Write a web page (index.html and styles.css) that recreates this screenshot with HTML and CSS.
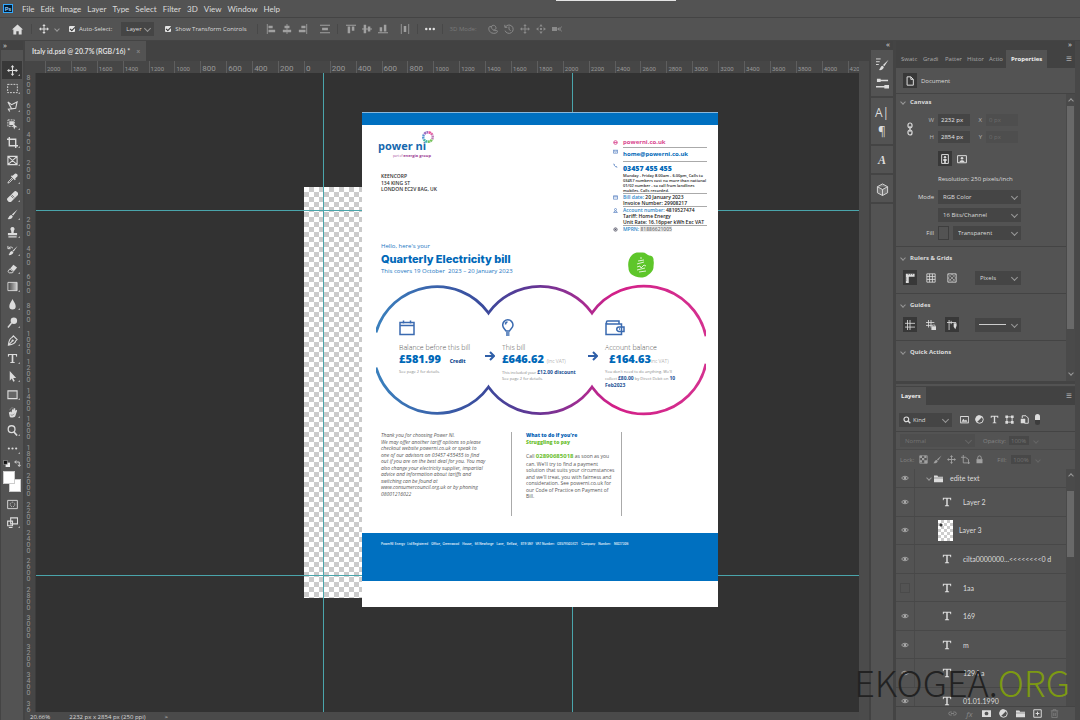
FILE: index.html
```html
<!DOCTYPE html>
<html lang="en">
<head>
    <meta charset="UTF-8">
    <meta name="viewport" content="width=device-width, initial-scale=1.0">
    <title>Italy id.psd</title>
    <link rel="stylesheet" href="styles.css">
</head>
<body>
    <!-- Shared icons -->
    <svg class="defs" aria-hidden="true">
        <symbol id="move" viewBox="0 0 12 12"><path d="M6 0l2 2.500H6.600V5.400H9.500V4l2.500 2-2.500 2V6.600H6.600V9.500H8L6 12 4 9.500H5.400V6.600H2.500V8L0 6l2.500-2v1.400H5.400V2.500H4z" fill="currentColor"/></symbol>
        <symbol id="type" viewBox="0 0 12 12"><path d="M1 1h10v3h-.8L9.500 2.200H6.900v7.500l1.600.5v.8h-5v-.8l1.600-.5V2.200H2.500L1.800 4H1z" fill="currentColor"/></symbol>
        <symbol id="brush" viewBox="0 0 12 12"><path d="M11.500.5L6.800 7.200 5.300 6zM4.800 6.600l1.500 1.300C6 10.300 3.500 11.500.5 11c1.500-.8 1.300-3.800 4.300-4.400z" fill="currentColor"/></symbol>
        <symbol id="eye" viewBox="0 0 12 12"><path d="M.8 6C3 2.600 9 2.600 11.200 6 9 9.400 3 9.400.8 6z" fill="none" stroke="currentColor" stroke-width="1.300"/><circle cx="6" cy="6" r="2" fill="currentColor"/></symbol>
        <symbol id="folder" viewBox="0 0 12 12"><path d="M0 2h4.500l1 1.500H12V5H0zM0 5.700h12V11H0z" fill="currentColor"/></symbol>
        <symbol id="halfcircle" viewBox="0 0 12 12"><circle cx="6" cy="6" r="5" fill="none" stroke="currentColor" stroke-width="1.300"/><path d="M9.500 2.500A5 5 0 1 0 2.500 9.500z" fill="currentColor"/></symbol>
        <symbol id="picture" viewBox="0 0 12 12"><path d="M.5 2h11v8.500H.5z" fill="none" stroke="currentColor" stroke-width="1.300"/><path d="M2 9l2.500-4 2 2.500L8 6l2 3z" fill="currentColor"/></symbol>
        <symbol id="lock" viewBox="0 0 12 12"><path d="M2 5.500h8V11H2z" fill="currentColor"/><path d="M3.700 5.500V3.500a2.300 2.300 0 0 1 4.600 0v2" fill="none" stroke="currentColor" stroke-width="1.300"/></symbol>
        <symbol id="alignstart" viewBox="0 0 12 12"><path d="M1 0h1v12H1zM3 2h5v3H3zM3 7h8v3H3z" fill="currentColor"/></symbol>
        <symbol id="aligncenter" viewBox="0 0 12 12"><path d="M5.500 0h1v12h-1zM3 2h6v3H3zM1 7h10v3H1z" fill="currentColor"/></symbol>
        <symbol id="spread" viewBox="0 0 12 12"><path d="M0 1h12v1H0zM0 10h12v1H0zM2.500 4.500h7v3h-7z" fill="currentColor"/></symbol>
    </svg>

    <header class="menubar">
        <span class="ps-logo">Ps</span>
        <nav>
            <button>File</button><button>Edit</button><button>Image</button><button>Layer</button><button>Type</button><button>Select</button><button>Filter</button><button>3D</button><button>View</button><button>Window</button><button>Help</button>
        </nav>
        <div class="window-strip"></div>
    </header>

    <div class="optionsbar">
        <button class="home" aria-label="Home"><svg viewBox="0 0 12 12"><path d="M6 .5L12 6h-1.500v5.500H7.300V8H4.700v3.500H1.500V6H0z" fill="currentColor"/></svg></button>
        <button class="current" aria-label="Move tool"><svg><use href="#move"/></svg><i class="chev"></i></button>
        <label class="check auto"><input type="checkbox" checked>Auto-Select:</label>
        <span class="select target"><select aria-label="Target"><option>Layer</option></select></span>
        <label class="check"><input type="checkbox" checked>Show Transform Controls</label>
        <div class="group first">
            <svg><use href="#alignstart"/></svg>
            <svg><use href="#aligncenter"/></svg>
            <svg class="flip"><use href="#alignstart"/></svg>
        </div>
        <div class="single"><svg><use href="#spread"/></svg></div>
        <div class="group">
            <svg class="turn"><use href="#alignstart"/></svg>
            <svg class="turn"><use href="#aligncenter"/></svg>
            <svg class="turnback"><use href="#alignstart"/></svg>
        </div>
        <div class="single"><svg class="turn"><use href="#spread"/></svg></div>
        <button class="more" aria-label="More options"><svg viewBox="0 0 12 12"><circle cx="1.500" cy="6" r="1.500"/><circle cx="6" cy="6" r="1.500"/><circle cx="10.500" cy="6" r="1.500"/></svg></button>
        <div class="mode3d">
            <span>3D Mode:</span>
            <svg viewBox="0 0 12 12"><path d="M2 3C0 5 1 9 4 10.500s7 .5 7.500-1.500S8 9 6 7 3 3 5 2s4 0 4.500 2-1 3-2.500 3M2 3l3 .5" fill="none" stroke="currentColor" stroke-width="1.200"/></svg>
            <svg viewBox="0 0 12 12"><path d="M1 1v3h3M1.500 4A5 5 0 1 1 1.300 8M6 3v3.500L8 8" fill="none" stroke="currentColor" stroke-width="1.200"/></svg>
            <svg><use href="#move"/></svg>
            <svg viewBox="0 0 12 12"><path d="M6 0l2 3H4zM6 12l2-3H4zM0 6l3-2v4zM12 6L9 4v4zM4.800 4.800h2.400v2.400H4.800z" fill="currentColor"/></svg>
            <svg viewBox="0 0 12 12"><path d="M0 3.500h6v5H0zM6 6l3-2.500v5z" fill="currentColor"/><path d="M11.500 3L9.500 6l2 3" fill="none" stroke="currentColor"/></svg>
        </div>
    </div>

    <main class="workspace">
        <aside class="tools">
            <div class="tools-head">»</div>
            <button class="active" aria-label="Move"><svg><use href="#move"/></svg></button>
            <button aria-label="Marquee"><svg viewBox="0 0 12 12"><path d="M.7 1.500h10.600v9H.7z" fill="none" stroke="currentColor" stroke-dasharray="2 1.200"/></svg></button>
            <button aria-label="Lasso"><svg viewBox="0 0 12 12"><path d="M1 1l4 3 6-3-1.500 7L5 8.500zM5 8.500L1.500 9l1.500 2.500" fill="none" stroke="currentColor" stroke-width="1.200"/></svg></button>
            <button aria-label="Object selection"><svg viewBox="0 0 12 12"><path d="M1 1h7v7H1z" fill="none" stroke="currentColor" stroke-dasharray="2 1"/><path d="M2.500 2.500h5v4h-5zM6 5l5.500 4H9l-1.200 2.500z" fill="currentColor"/></svg></button>
            <button aria-label="Crop"><svg viewBox="0 0 12 12"><path d="M2.500 0v9.500H12M0 2.500h9.500V12" fill="none" stroke="currentColor" stroke-width="1.500"/></svg></button>
            <button aria-label="Frame"><svg viewBox="0 0 12 12"><path d="M1 1.500h10v9H1zM1 1.500l10 9M11 1.500l-10 9" fill="none" stroke="currentColor" stroke-width="1.200"/></svg></button>
            <button aria-label="Eyedropper"><svg viewBox="0 0 12 12"><path d="M6 3l3-2.500c2 0 3 1.500 2.500 3L9 6l.5 1-1 .8L4.200 3.500 5 2.600z" fill="currentColor"/><path d="M6 5L1.500 9.500 1 11l1.500-.5L7 6" fill="none" stroke="currentColor"/></svg></button>
            <button aria-label="Healing brush"><svg viewBox="0 0 12 12"><rect x="-1" y="3.500" width="14" height="5.500" rx="2" transform="rotate(-45 6 6)" fill="currentColor"/><path d="M4 5l3 3M5 4l3 3" stroke="#535353" stroke-width=".8"/></svg></button>
            <button aria-label="Brush"><svg><use href="#brush"/></svg></button>
            <button aria-label="Clone stamp"><svg viewBox="0 0 12 12"><path d="M6 0a2.300 2.300 0 0 1 1.500 4L7.200 6.500H11V9H1V6.500h3.800L4.500 4A2.300 2.300 0 0 1 6 0zM1.500 10h9v1.500h-9z" fill="currentColor"/></svg></button>
            <button aria-label="History brush"><svg viewBox="0 0 12 12"><path d="M11.500 1L7.300 7.200 6 6.200zM5.500 6.600L7 8C6.500 10.300 4 11.500 1.500 11c1.500-.8 1-3.800 4-4.400z" fill="currentColor"/><path d="M1 1v3h3M1.300 4C2 2 5 1.500 6.500 3.500" fill="none" stroke="currentColor"/></svg></button>
            <button aria-label="Eraser"><svg viewBox="0 0 12 12"><path d="M7 2l4 3-3.500 4-4-3z" fill="currentColor"/><path d="M3 6.500l4 3-1.200 1.200H2.500L1 9.300z" fill="none" stroke="currentColor"/></svg></button>
            <button aria-label="Gradient"><svg viewBox="0 0 12 12"><defs><linearGradient id="grad"><stop stop-color="#444"/><stop offset="1" stop-color="#ccc"/></linearGradient></defs><path d="M1 1.500h10v9H1z" fill="url(#grad)" stroke="currentColor"/></svg></button>
            <button aria-label="Blur"><svg viewBox="0 0 12 12"><path d="M6 0c1 2.500 3.500 5 3.500 8a3.500 3.500 0 0 1-7 0C2.500 5 5 2.500 6 0z" fill="currentColor"/></svg></button>
            <button aria-label="Dodge"><svg viewBox="0 0 12 12"><circle cx="7.500" cy="4" r="3.500" fill="currentColor"/><path d="M5 6.500l-4 5" stroke="currentColor" stroke-width="1.500"/></svg></button>
            <button aria-label="Pen"><svg viewBox="0 0 12 12"><path d="M7 1l4 4-1.500 1.500C9 9.500 6 10.500 1.500 11 2 6.500 3 3.500 5.500 2.700zM1.500 11L6 6.500" fill="none" stroke="currentColor" stroke-width="1.200"/><circle cx="6.200" cy="6" r="1.200" fill="currentColor"/></svg></button>
            <button aria-label="Type"><svg><use href="#type"/></svg></button>
            <button aria-label="Path selection"><svg viewBox="0 0 12 12"><path d="M3 0l7 7.500H6.800L8.500 11l-1.700.8L5.300 8.300 3 10.500z" fill="currentColor"/></svg></button>
            <button aria-label="Rectangle"><svg viewBox="0 0 12 12"><path d="M1 2h10v8.500H1z" fill="#666" stroke="currentColor" stroke-width="1.200"/></svg></button>
            <button aria-label="Hand"><svg viewBox="0 0 12 12"><path d="M2 6l2-1 1 1 .5-3.500L7 3l.5-2L9 1.500V4l1.500-1L11 4 9 10c-2 2-5 2-6 .5z" fill="currentColor"/><path d="M3 3.500C4 1 5 .7 7 1M4 8.500c1.500 1 3 0 4-1" fill="none" stroke="#888"/></svg></button>
            <button aria-label="Zoom"><svg viewBox="0 0 12 12"><circle cx="5" cy="4.500" r="3.700" fill="none" stroke="currentColor" stroke-width="1.400"/><path d="M7.500 7.500l3.500 4" stroke="currentColor" stroke-width="1.700"/></svg></button>
            <button aria-label="Edit toolbar"><svg viewBox="0 0 12 12" fill="currentColor"><circle cx="2" cy="6" r="1.200"/><circle cx="6" cy="6" r="1.200"/><circle cx="10" cy="6" r="1.200"/></svg></button>
            <div class="swap">
                <svg viewBox="0 0 8 8"><path d="M3 3h5v5H3z" fill="#eee"/><path d="M.5.5h4.500v4.500H.5z" fill="#111" stroke="#bbb" stroke-width=".6"/></svg>
                <svg viewBox="0 0 8 8"><path d="M2.500.5L.8 2.300l1.700 1.700M1 2.300h5v5M4.300 5.500L6 7.300l1.700-1.800" fill="none" stroke="#ddd"/></svg>
            </div>
            <div class="swatches"><span class="back"></span><span class="front"></span></div>
            <button class="plain" aria-label="Quick mask"><svg viewBox="0 0 12 12"><path d="M.7 1.500h10.600v9H.7z" fill="none" stroke="currentColor"/><circle cx="6" cy="6" r="2.500" fill="none" stroke="currentColor" stroke-dasharray="1 1"/></svg></button>
            <button aria-label="Screen mode"><svg viewBox="0 0 12 12"><path d="M4 1h7.500v6.500H4zM.7 4.500H6v5H.7zM2 11.500h4" fill="none" stroke="currentColor" stroke-width="1.200"/></svg></button>
        </aside>

        <section class="document">
            <div class="tabbar"><div class="tab">Italy id.psd @ 20.7% (RGB/16) *<button aria-label="Close tab">×</button></div></div>
            <div class="ruler-top" id="rulerTop"></div>
            <div class="ruler-left" id="rulerLeft"></div>
            <div class="canvas">
                <div class="artboard"></div>
                <div class="guide v one"></div>
                <div class="guide v two"></div>
                <div class="guide h three"></div>
                <div class="guide h four"></div>

                <article class="bill">
                    <div class="bill-top"></div>
                    <div class="bill-head">
                        <div class="sender">
                            <div class="brand">
                                <span class="brand-name">power ni</span>
                                <svg viewBox="0 0 14 14" fill="none" stroke-width="2.400">
                                    <path d="M7 2.200A4.800 4.800 0 0 1 11.200 4.600" stroke="#e4579d"/>
                                    <path d="M11.200 4.600A4.800 4.800 0 0 1 11.200 9.400" stroke="#c07ab8"/>
                                    <path d="M11.200 9.400A4.800 4.800 0 0 1 7 11.800" stroke="#76c25c"/>
                                    <path d="M7 11.800A4.800 4.800 0 0 1 2.800 9.400" stroke="#48b8a8"/>
                                    <path d="M2.800 9.400A4.800 4.800 0 0 1 2.800 4.600" stroke="#5496d2"/>
                                    <path d="M2.800 4.600A4.800 4.800 0 0 1 7 2.200" stroke="#9a6cc0"/>
                                    <circle cx="7" cy="7" r="4.800" stroke="#fff" stroke-dasharray=".5 2" stroke-width="3"/>
                                </svg>
                            </div>
                            <p class="brand-sub"><span>part of</span> <b>energia group</b></p>
                            <address>KEENCORP<br>134 KING ST<br>LONDON EC2V 8AG, UK</address>
                        </div>
                        <ul class="contact">
                            <li class="web"><svg viewBox="0 0 6 6"><circle cx="3" cy="3" r="2.200"/><path d="M1 3h4"/></svg><p>powerni.co.uk</p></li>
                            <li class="mail"><svg viewBox="0 0 6 6"><path d="M.5 1.500h5v3.500h-5zM.5 1.500L3 3.500l2.500-2"/></svg><p>home@powerni.co.uk</p></li>
                            <li class="phone"><svg viewBox="0 0 6 6"><path d="M1 1c0 2 2 4 4 4M1 1l1 1M5 5L4 4"/></svg><p>03457 455 455</p>
                                <small>Monday - Friday 8.00am - 6.00pm, Calls to<br>03457 numbers cost no more than national<br>01/02 number - so call from landlines<br>mobiles. Calls recorded.</small></li>
                            <li><svg viewBox="0 0 6 6"><path d="M.5 1h5v4h-5zM.5 2.200h5"/></svg><p><em>Bill date:</em> 20 January 2023<br>Invoice Number: 29908217</p></li>
                            <li><svg viewBox="0 0 6 6"><circle cx="3" cy="1.800" r="1.200"/><path d="M.8 5.500h4.400L3.800 3.500H2.200z"/></svg><p><em>Account number:</em> 4819527474<br>Tariff: Home Energy<br>Unit Rate: 16.16pper kWh Exc VAT</p></li>
                            <li class="mprn"><svg viewBox="0 0 6 6" class="dark"><circle cx="3" cy="3" r="2"/><path d="M3 2v2M2 3h2"/></svg><p><em>MPRN:</em> <span>81886621005</span></p></li>
                        </ul>
                    </div>

                    <div class="bill-title">
                        <div>
                            <p>Hello, here's your</p>
                            <h1>Quarterly Electricity bill</h1>
                            <p>This covers 19 October &nbsp;2023 – 20 January 2023</p>
                        </div>
                        <svg class="badge" viewBox="0 0 28 28">
                            <path d="M5 4C9 0 13 2 15 1.500c3-.5 5 2 7 3 3 0 5 2 4.500 5 .8 3-.2 5 0 7-.5 4-3.500 6-6 8-3 2.500-8 2.500-12 1C4 24 1.500 21 1.500 17 .8 13 1 8 5 4z" fill="#5ec62a"/>
                            <path d="M11 10l6-1M10 13l7-2M10 16l3-1 1 2 3-3 2 1M10 19l8-2M12 21l7-1M13 7h2" fill="none" stroke="#fff" stroke-width=".8"/>
                        </svg>
                    </div>

                    <div class="summary">
                        <svg class="rings" viewBox="0 0 330 132" preserveAspectRatio="none">
                            <defs>
                                <linearGradient id="ring" gradientUnits="userSpaceOnUse" x1="0" y1="0" x2="330" y2="0">
                                    <stop offset="0" stop-color="#3a80bd"/>
                                    <stop offset=".33" stop-color="#3a4a9c"/>
                                    <stop offset=".48" stop-color="#633594"/>
                                    <stop offset=".62" stop-color="#a02d92"/>
                                    <stop offset=".72" stop-color="#d31f88"/>
                                    <stop offset="1" stop-color="#d4318f"/>
                                </linearGradient>
                            </defs>
                            <path d="M0 48.400A63.500 63.500 0 0 1 112.500 29A63.500 63.500 0 0 1 216 29A63.500 63.500 0 0 1 330 52.300M0 83.600A63.500 63.500 0 0 0 112.500 103A63.500 63.500 0 0 0 216 103A63.500 63.500 0 0 0 330 79.700" fill="none" stroke="url(#ring)" stroke-width="2.800"/>
                        </svg>
                        <div class="amount">
                            <svg class="ico" viewBox="0 0 20 18"><path d="M1 3.500h14v12H1zM1 6.500h14M4.500 1.500v3M11.500 1.500v3"/></svg>
                            <h2>Balance before this bill</h2>
                            <p class="sum">£581.99 <b>Credit</b></p>
                            <p class="note">See page 2 for details.</p>
                        </div>
                        <svg class="arrow" viewBox="0 0 10 10"><path d="M0 5h9M5 1l4 4-4 4"/></svg>
                        <div class="amount">
                            <svg class="ico" viewBox="0 0 20 18"><path d="M4 12C3 10 .7 9 .7 6a5 5 0 0 1 10.300 0c0 3-2.500 4-3.500 6zM4 14h3.500M4 16h3.500M3.500 5.500C3.500 4 4.500 3 5.500 3"/></svg>
                            <h2>This bill</h2>
                            <p class="sum">£646.62 <small>(inc VAT)</small></p>
                            <p class="note">This included your <b>£12.00 discount</b><br>See page 2 for details.</p>
                        </div>
                        <svg class="arrow" viewBox="0 0 10 10"><path d="M0 5h9M5 1l4 4-4 4"/></svg>
                        <div class="amount">
                            <svg class="ico" viewBox="0 0 20 18"><path d="M1 4v11.500h15.500V5H2.500C1 5 1 2 2.500 2H14v3M16.500 8H14a2.200 2.200 0 0 0 0 4.500h5V8h-2.500M14 10h1"/></svg>
                            <h2>Account balance</h2>
                            <p class="sum last">£164.63<small>inc VAT)</small></p>
                            <p class="note">You don't need to do anything. We'll<br>collect <b>£80.00</b> by Direct Debit on <b>10<br>Feb2023</b></p>
                        </div>
                    </div>

                    <div class="notes">
                        <p class="thanks">Thank you for choosing Power NI.<br>We may offer another tariff options so please<br>checkout website powerni.co.uk or speak to<br>one of our advisors on 03457 455455 to find<br>out if you are on the best deal for you. You may<br>also change your electricity supplier, impartial<br>advice and information about tariffs and<br>switching can be found at<br>www.consumercouncil.org.uk or by phoning<br>08001216022</p>
                        <div class="help">
                            <h3>What to do if you're</h3>
                            <h3 class="green">Struggling to pay</h3>
                            <p>Call <b>02890685018</b> as soon as you<br>can. We'll try to find a payment<br>solution that suits your circumstances<br>and we'll treat, you with fairness and<br>consideration. See powerni.co.uk for<br>our Code of Practice on Payment of<br>Bill.</p>
                        </div>
                    </div>
                    <footer>PowerNI &nbsp;Energy &nbsp; Ltd Registered &nbsp; &nbsp;Office, &nbsp;Greenwood &nbsp; &nbsp;House, &nbsp; 64 Newforge &nbsp; &nbsp;Lane, &nbsp; Belfast, &nbsp; &nbsp;BT9 5NF &nbsp; VAT Number: &nbsp; GB578503421 &nbsp; &nbsp; Company &nbsp; &nbsp;Number: &nbsp; &nbsp;NI027306</footer>
                </article>
            </div>
            <div class="status"><span>20.66%</span><span>2232 px x 2854 px (250 ppi)</span><span>&gt;</span></div>
        </section>

        <div class="gutter"></div>

        <aside class="dock">
            <div class="dock-head">«</div>
            <div class="dock-group">
                <button aria-label="Brush settings"><svg viewBox="0 0 14 14"><path d="M0 1h5M0 4h4M0 7h3" stroke="currentColor"/><path d="M13.500 2L9 9 7.500 7.500zM7 8.300l1.500 1.300C8 12 6 13.500 3 13c1.500-.8 1.500-4 4-4.700z" fill="currentColor"/></svg></button>
                <button aria-label="Brushes"><svg viewBox="0 0 14 14"><path d="M1 2h4v3.500H1zM5 3h8v1.500H5zM9 8.500h5v4H9zM0 9.800h9v1.500H0z" fill="currentColor"/></svg></button>
            </div>
            <div class="dock-group">
                <button class="letter" aria-label="Character">A|</button>
                <button class="letter" aria-label="Paragraph">¶</button>
            </div>
            <div class="dock-group"><button class="letter script" aria-label="Glyphs">A</button></div>
            <div class="dock-group"><button aria-label="3D"><svg viewBox="0 0 14 14"><path d="M7 1l5.500 3v6.500L7 13.500l-5.500-3V4zM1.500 4L7 7l5.500-3M7 7v6.500" fill="#777" stroke="currentColor"/></svg></button></div>
        </aside>

        <aside class="panels">
            <div class="panels-head">»</div>
            <section class="properties">
                <div class="tabs">
                    <button>Swatc</button><button>Gradi</button><button>Patter</button><button>Histor</button><button>Actio</button><button class="on">Properties</button>
                    <span class="menu">≡</span>
                </div>
                <div class="doc-row"><span class="pic dark"><svg viewBox="0 0 12 12"><path d="M2.500 1h4.500L10 4v7H2.500zM7 1v3h3" fill="none" stroke="currentColor" stroke-width="1.200"/></svg></span>Document</div>
                <div class="scroller">
                    <div class="sections">
                        <div class="section canvas-props">
                            <h4><i class="chev"></i>Canvas</h4>
                            <div class="size">
                                <svg viewBox="0 0 8 14" fill="none" stroke="currentColor" stroke-width="1.200"><rect x="2" y="1" width="4" height="5" rx="2"/><rect x="2" y="8" width="4" height="5" rx="2"/><path d="M4 4v6"/></svg>
                                <div class="fields">
                                    <label for="w">W</label><input id="w" value="2232 px"><label for="x">X</label><input id="x" value="0 px" disabled>
                                    <label for="h">H</label><input id="h" value="2854 px"><label for="y">Y</label><input id="y" value="0 px" disabled>
                                </div>
                            </div>
                            <div class="orient">
                                <button class="pic dark" aria-label="Portrait"><svg viewBox="0 0 12 12"><path d="M2 .7h8v10.600H2z" fill="none" stroke="currentColor" stroke-width="1.200"/><circle cx="6" cy="4" r="1.500" fill="currentColor"/><path d="M4 6h4v2.500H7V11H5V8.500H4z" fill="currentColor"/></svg></button>
                                <button class="pic" aria-label="Landscape"><svg viewBox="0 0 12 12"><path d="M.7 2h10.600v8.500H.7z" fill="none" stroke="currentColor" stroke-width="1.200"/><circle cx="6" cy="5" r="1.500" fill="currentColor"/><path d="M3 9.500C3.500 7 8.500 7 9 9.500z" fill="currentColor"/></svg></button>
                            </div>
                            <p class="resolution">Resolution: 250 pixels/inch</p>
                            <div class="modes">
                                <label for="mode">Mode</label><span class="select"><select id="mode"><option>RGB Color</option></select></span>
                                <span></span><span class="select"><select aria-label="Depth"><option>16 Bits/Channel</option></select></span>
                                <label for="fill">Fill</label><div class="fill"><span class="chip"></span><span class="select"><select id="fill"><option>Transparent</option></select></span></div>
                            </div>
                        </div>
                        <div class="section">
                            <h4><i class="chev"></i>Rulers &amp; Grids</h4>
                            <div class="line">
                                <button class="pic dark" aria-label="Rulers"><svg viewBox="0 0 12 12"><path d="M1 1h10.500v3.500H4.500V12H1z" fill="currentColor"/><path d="M4 1v1.500M6.500 1v1.500M9 1v1.500M1 6h1.500M1 8.500h1.500" stroke="#383838" stroke-width=".6"/></svg></button>
                                <button class="pic" aria-label="Grid"><svg viewBox="0 0 12 12"><path d="M1 1h10v10H1zM4.300 1v10M7.700 1v10M1 4.300h10M1 7.700h10" fill="none" stroke="currentColor"/></svg></button>
                                <button class="pic" aria-label="Pixel grid"><svg viewBox="0 0 12 12"><path d="M1 1h10v10H1z" fill="none" stroke="currentColor"/><path d="M2 2l8 8M10 2l-8 8M6 1.500L10.500 6 6 10.500 1.500 6z" fill="none" stroke="currentColor" stroke-dasharray="1 1"/></svg></button>
                                <span class="select"><select aria-label="Units"><option>Pixels</option></select></span>
                            </div>
                        </div>
                        <div class="section">
                            <h4><i class="chev"></i>Guides</h4>
                            <div class="line">
                                <button class="pic dark" aria-label="Show guides"><svg viewBox="0 0 12 12"><path d="M3 0v12M6 0v12M0 4h12M0 8.500h12" fill="none" stroke="currentColor"/></svg></button>
                                <button class="pic" aria-label="Lock guides"><svg viewBox="0 0 12 12"><path d="M3 0v9M6 0v9M0 3h10M0 6.500h7" fill="none" stroke="currentColor"/><path d="M6.500 7.500H12V12H6.500z" fill="currentColor"/><path d="M7.700 7.500V6h3v1.500" fill="none" stroke="currentColor" stroke-width=".8"/></svg></button>
                                <button class="pic dark" aria-label="Smart guides"><svg viewBox="0 0 12 12"><path d="M2.500 0v12M0 3h11M5 1v4" fill="none" stroke="currentColor"/><path d="M8 4h3.500v3L10 11 8 8z" fill="currentColor"/></svg></button>
                                <span class="select solid"><select aria-label="Guide style"><option></option></select></span>
                            </div>
                        </div>
                        <div class="section quick"><h4><i class="chev"></i>Quick Actions</h4></div>
                    </div>
                    <div class="scrollbar"><i class="chev up"></i><div class="thumb"></div><i class="chev"></i></div>
                </div>
            </section>

            <section class="layers">
                <div class="tabs"><button class="on">Layers</button><span class="menu">≡</span></div>
                <div class="filter-row">
                    <span class="select kind"><svg viewBox="0 0 12 12"><circle cx="5" cy="5" r="3.500" fill="none" stroke="currentColor" stroke-width="1.800"/><path d="M7.500 7.500L11 11" stroke="currentColor" stroke-width="2"/></svg><select aria-label="Filter kind"><option>Kind</option></select></span>
                    <svg><use href="#picture"/></svg>
                    <svg><use href="#halfcircle"/></svg>
                    <svg><use href="#type"/></svg>
                    <svg viewBox="0 0 12 12"><path d="M2.500 2.500h7v7h-7z" fill="none" stroke="currentColor" stroke-width="1.200"/><path d="M.5.500h3.500V4H.5zM8 .5h3.500V4H8zM.5 8h3.500v3.500H.5zM8 8h3.500v3.500H8z" fill="currentColor"/></svg>
                    <svg viewBox="0 0 12 12"><path d="M3 1h5l3 3v7H6M3 1v3" fill="none" stroke="currentColor" stroke-width="1.300"/><path d="M1 5h6v6H1z" fill="currentColor"/></svg>
                    <span class="toggle"></span>
                </div>
                <div class="blend-row">
                    <span class="select"><select aria-label="Blend mode" disabled><option>Normal</option></select></span>
                    <label for="opacity">Opacity:</label><input id="opacity" value="100%" disabled><i class="chev"></i>
                </div>
                <div class="lock-row">
                    <span>Lock:</span>
                    <svg viewBox="0 0 12 12"><path d="M1 1h10v10H1z" fill="none" stroke="currentColor"/><path d="M1 1h3v3H1zM7 1h3v3H7zM4 4h3v3H4zM1 7h3v3H1zM7 7h4v4H7z" fill="currentColor"/></svg>
                    <svg><use href="#brush"/></svg>
                    <svg><use href="#move"/></svg>
                    <svg viewBox="0 0 12 12"><path d="M3 0v10.500h9M0 3h6l4 3v6" fill="none" stroke="currentColor" stroke-width="1.200"/></svg>
                    <svg><use href="#lock"/></svg>
                    <label for="lfill">Fill:</label><input id="lfill" value="100%" disabled><i class="chev"></i>
                </div>
                <div class="scroller">
                    <ul class="list">
                        <li class="folder"><span class="vis"><svg><use href="#eye"/></svg></span><i class="chev"></i><svg><use href="#folder"/></svg>edite text</li>
                        <li><span class="vis"><svg><use href="#eye"/></svg></span><svg class="t"><use href="#type"/></svg>Layer 2</li>
                        <li class="pixel"><span class="vis"><svg><use href="#eye"/></svg></span><span class="thumbnail"></span>Layer 3</li>
                        <li><span class="vis"><svg><use href="#eye"/></svg></span><svg class="t"><use href="#type"/></svg>cilta0000000...&lt;&lt;&lt;&lt;&lt;&lt;&lt;&lt;0 d</li>
                        <li><span class="vis off"></span><svg class="t"><use href="#type"/></svg>1aa</li>
                        <li><span class="vis"><svg><use href="#eye"/></svg></span><svg class="t"><use href="#type"/></svg>169</li>
                        <li><span class="vis"><svg><use href="#eye"/></svg></span><svg class="t"><use href="#type"/></svg>m</li>
                        <li><span class="vis"><svg><use href="#eye"/></svg></span><svg class="t"><use href="#type"/></svg>1294 a</li>
                        <li class="cut"><span class="vis"><svg><use href="#eye"/></svg></span><svg class="t"><use href="#type"/></svg>01.01.1990</li>
                    </ul>
                    <div class="scrollbar"><i class="chev up"></i><div class="thumb"></div></div>
                </div>
                <div class="layer-actions">
                    <button class="dim" aria-label="Link"><svg viewBox="0 0 12 12"><path d="M5 4H3a2 2 0 0 0 0 4h2M7 4h2a2 2 0 0 1 0 4H7M4 6h4" fill="none" stroke="currentColor" stroke-width="1.200"/></svg></button>
                    <button class="dim fx" aria-label="Effects">fx</button>
                    <button aria-label="Mask"><svg viewBox="0 0 12 12"><path fill-rule="evenodd" d="M0 1.500h12v9H0zM6 3.500a2.500 2.500 0 1 0 .01 0z" fill="currentColor"/></svg></button>
                    <button aria-label="Adjustment"><svg><use href="#halfcircle"/></svg></button>
                    <button aria-label="Group"><svg><use href="#folder"/></svg></button>
                    <button aria-label="New layer"><svg viewBox="0 0 12 12"><path d="M1 1h10v10H1zM6 3.500v5M3.500 6h5" fill="none" stroke="currentColor" stroke-width="1.300"/></svg></button>
                    <button class="dim" aria-label="Delete"><svg viewBox="0 0 12 12"><path d="M1 2.500h10M4 2.500V1h4v1.500M2.500 3v8.500h7V3M5 5v4.500M7 5v4.500" fill="none" stroke="currentColor"/></svg></button>
                </div>
            </section>
        </aside>
    </main>

    <div class="watermark">EKOGEA.<span>ORG</span></div>

    <script src="rulers.js"></script>
</body>
</html>
```
FILE: styles.css
```css
* {
    box-sizing: border-box;
}
body {
    margin: 0;
    height: 100vh;
    display: flex;
    flex-direction: column;
    overflow: hidden;
    background: #535353;
    color: #dcdcdc;
    font-family: "Open Sans", "Liberation Sans", sans-serif;
    font-size: 6px;
    line-height: 10px;
}
p, h1, h2, h3, h4, ul {
    margin: 0;
    padding: 0;
    list-style: none;
}
button, input, select {
    font: inherit;
    color: inherit;
    border: none;
    background: none;
    padding: 0;
    margin: 0;
    border-radius: 0;
}
svg {
    width: 10px;
    height: 10px;
    flex: none;
    display: block;
}
.defs {
    position: absolute;
    width: 0;
    height: 0;
}
.chev {
    width: 4px;
    height: 4px;
    flex: none;
    border-right: 1px solid #999;
    border-bottom: 1px solid #999;
    transform: rotate(45deg);
}
.chev.up {
    transform: rotate(225deg);
}
.select {
    position: relative;
    display: flex;
    align-items: center;
    height: 14px;
    background: #454545;
}
.select select {
    appearance: none;
    width: 100%;
    padding: 0 5px;
}
.select::after {
    content: "";
    position: absolute;
    right: 4px;
    top: 4px;
    width: 4px;
    height: 4px;
    border-right: 1px solid #999;
    border-bottom: 1px solid #999;
    transform: rotate(45deg);
}

/* Menu and options */
.menubar {
    position: relative;
    display: flex;
    align-items: center;
    height: 17px;
    flex: none;
    padding-left: 3px;
    font-family: Lato, sans-serif;
    font-size: 8px;
}
.menubar nav {
    display: flex;
    gap: 6px;
    margin-left: 9px;
}
.ps-logo {
    width: 10px;
    height: 9px;
    border: 1px solid #31a8ff;
    background: #001e36;
    color: #9fd5ff;
    font-size: 6px;
    line-height: 7px;
    font-weight: bold;
    text-align: center;
}
.window-strip {
    position: absolute;
    top: 0;
    left: 51.5%;
    width: 120px;
    height: 1px;
    background: #e4e4e4;
}
.optionsbar {
    display: flex;
    align-items: center;
    height: 24px;
    flex: none;
    padding-left: 12px;
    border-top: 1px solid #444;
    border-bottom: 1px solid #444;
    white-space: nowrap;
}
.home svg {
    width: 11px;
    height: 11px;
}
.current {
    display: flex;
    align-items: center;
    gap: 6px;
    margin-left: 8px;
    padding-left: 7px;
    border-left: 1px solid #484848;
}
.check {
    display: flex;
    align-items: center;
    gap: 4px;
}
.check input {
    appearance: none;
    position: relative;
    width: 6px;
    height: 6px;
    border-radius: 1px;
    background: #e4e4e4;
}
.check input:checked::after {
    content: "";
    position: absolute;
    left: 2px;
    top: 0;
    width: 2px;
    height: 4px;
    border-right: 1px solid #333;
    border-bottom: 1px solid #333;
    transform: rotate(45deg);
}
.auto {
    margin-left: 10px;
}
.target {
    width: 33px;
    margin: 0 11px 0 9px;
}
.group, .single {
    display: flex;
    gap: 6px;
    padding: 0 8px;
    color: #a0a0a0;
    border-left: 1px solid #484848;
}
.group.first {
    margin-left: 10px;
}
.single {
    border-left-color: transparent;
    padding: 0 7px 0 3px;
}
.flip {
    transform: scaleX(-1);
}
.turn {
    transform: rotate(90deg);
}
.turnback {
    transform: rotate(-90deg);
}
.more {
    padding: 0 7px;
    border-left: 1px solid #484848;
    fill: #e0e0e0;
}
.mode3d {
    display: flex;
    align-items: center;
    gap: 6px;
    padding-left: 7px;
    border-left: 1px solid #484848;
    color: #8a8a8a;
}
.mode3d span {
    width: 32px;
    color: #7a7a7a;
}

/* Workspace */
.workspace {
    display: flex;
    flex: 1;
    min-height: 0;
}
.tools {
    width: 25px;
    flex: none;
    display: flex;
    flex-direction: column;
    align-items: center;
    border-left: 1px solid #444;
    border-right: 2px solid #444;
}
.tools-head {
    align-self: stretch;
    height: 9px;
    margin-bottom: 11px;
    padding-left: 2px;
    background: #424242;
    line-height: 7px;
    font-size: 8px;
}
.tools button {
    position: relative;
    width: 20px;
    height: 18px;
    flex: none;
    display: flex;
    align-items: center;
    justify-content: center;
}
.tools button::after {
    content: "";
    position: absolute;
    right: 2px;
    bottom: 3px;
    border-left: 2px solid transparent;
    border-bottom: 2px solid #aaa;
}
.tools .plain::after {
    display: none;
}
.tools .active {
    background: #383838;
}
.tools svg {
    width: 11px;
    height: 11px;
}
.swap {
    display: flex;
    gap: 4px;
    height: 12px;
    align-items: center;
}
.tools .swap svg {
    width: 7px;
    height: 7px;
}
.swatches {
    position: relative;
    width: 20px;
    height: 26px;
}
.swatches span {
    position: absolute;
    width: 12px;
    height: 13px;
    background: #fff;
    border: 1px solid #ccc;
}
.swatches .front {
    left: 1px;
    top: 2px;
}
.swatches .back {
    left: 7px;
    top: 10px;
}

.document {
    flex: 1;
    min-width: 0;
    display: grid;
    grid-template-columns: 11px 1fr;
    grid-template-rows: 20px 12px 1fr 8px;
}
.tabbar {
    grid-column: 1 / 3;
    display: flex;
    background: #424242;
}
.tab {
    display: flex;
    align-items: center;
    gap: 6px;
    padding: 0 6px 0 7px;
    background: #535353;
    font-family: Lato, sans-serif;
    font-size: 7px;
    font-weight: bold;
    white-space: nowrap;
}
.tab button {
    color: #888;
}
.ruler-top {
    grid-column: 1 / 3;
    display: flex;
    padding-left: 20px;
    overflow: hidden;
    background: #464646;
    color: #999;
    font-family: Roboto, sans-serif;
}
.ruler-top span {
    flex: 1 1 0;
    min-width: 0;
    padding-left: 1px;
    border-left: 1px solid #5e5e5e;
    font-size: 6px;
    line-height: 15px;
}
.ruler-top .wide {
    font-size: 8px;
}
.ruler-top span:last-child, .ruler-left span:last-child {
    flex-grow: 0.4;
    overflow: hidden;
}
.ruler-left {
    display: flex;
    flex-direction: column;
    padding-top: 2px;
    overflow: hidden;
    background: #464646;
    color: #999;
    border-right: 1px solid #3c3c3c;
    font-family: Roboto, sans-serif;
}
.ruler-left span {
    flex: 1 1 0;
    min-height: 0;
    width: 7px;
    text-align: center;
    font-size: 7px;
    line-height: 6px;
    white-space: pre-line;
}
.ruler-left .wide {
    line-height: 7px;
}
.canvas {
    position: relative;
    overflow: hidden;
    background: #323232;
}
.artboard {
    position: absolute;
    left: 268px;
    top: 114px;
    width: 360px;
    height: 411px;
    background: repeating-conic-gradient(#cbcbcb 0 25%, #fff 0 50%) 0 0 / 10px 10px;
}
.guide {
    position: absolute;
    background: #4aa5ab;
}
.guide.v {
    top: 0;
    bottom: 0;
    width: 1px;
}
.guide.h {
    left: 0;
    right: 0;
    height: 1px;
}
.guide.one {
    left: 287px;
}
.guide.two {
    left: 536px;
}
.guide.three {
    top: 137px;
}
.guide.four {
    top: 502px;
}
.status {
    grid-column: 1 / 3;
    display: flex;
    gap: 19px;
    padding-left: 5px;
    background: #4a4a4a;
    overflow: hidden;
    white-space: nowrap;
}

/* Electricity bill */
.bill {
    position: absolute;
    left: 326px;
    top: 39px;
    width: 356px;
    height: 495px;
    background: #fff;
    color: #333;
    font-size: 5px;
    line-height: 1.3;
    display: flex;
    flex-direction: column;
}
.bill-top {
    height: 13px;
    flex: none;
    background: #0070c0;
    border-top: 1px solid #8ab8dc;
}
.bill-head {
    display: flex;
    justify-content: space-between;
    height: 115px;
    padding: 4px 11px 0 16px;
}
.brand {
    display: flex;
    color: #1567ae;
}
.brand-name {
    padding-top: 9px;
    font-size: 11px;
    line-height: 16px;
    font-weight: 700;
}
.brand svg {
    width: 14px;
    height: 14px;
    margin-left: -5px;
    margin-top: 1px;
}
.brand-sub {
    margin: 0 0 15px 15px;
    font-size: 3px;
    line-height: 3px;
    color: #a03c96;
}
.brand-sub b {
    font-size: 4px;
}
.bill address {
    padding-left: 3px;
    font-style: normal;
    font-weight: 600;
    color: #333;
}
.contact {
    width: 93px;
    padding-top: 10px;
    font-weight: 600;
    color: #222;
}
.contact li {
    position: relative;
    margin-left: 9px;
    border-top: 1px solid #aaa;
    line-height: 6px;
    white-space: nowrap;
}
.contact li:first-child {
    border-top: none;
}
.contact svg {
    position: absolute;
    left: -10px;
    top: 1px;
    width: 5px;
    height: 5px;
    fill: none;
    stroke: #6a8fc8;
}
.contact svg.dark {
    stroke: #556;
}
.contact em {
    font-style: normal;
    color: #2b86c8;
}
.contact .web, .contact .mail {
    font-size: 6px;
    line-height: 7px;
    font-weight: bold;
    color: #0068b8;
}
.contact .web {
    height: 8px;
    color: #d9468e;
}
.contact .web svg {
    stroke: #d9468e;
}
.contact .mail {
    padding-top: 3px;
    height: 14px;
}
.contact .phone p {
    margin-top: 2px;
    font-size: 7px;
    line-height: 9px;
    font-weight: 800;
    color: #0068b8;
}
.contact small {
    display: block;
    font-size: 4px;
    line-height: 5px;
    height: 20px;
}
.contact .mprn span {
    color: #777;
    background: #eee;
}
.bill-title {
    display: flex;
    justify-content: space-between;
    padding: 2px 63px 0 19px;
    height: 44px;
    color: #1a76c2;
    font-size: 6px;
    line-height: 9px;
}
.bill-title h1 {
    font-family: Inter, "Liberation Sans", sans-serif;
    font-size: 11px;
    line-height: 16px;
    font-weight: 800;
    color: #0068b8;
}
.badge {
    width: 28px;
    height: 28px;
    margin-top: 9px;
}
.summary {
    position: relative;
    display: flex;
    margin: 0 12px 0 14px;
    height: 132px;
    padding: 35px 0 0 23px;
}
.rings {
    position: absolute;
    left: 0;
    top: 0;
    width: 100%;
    height: 100%;
}
.amount {
    position: relative;
    width: 86px;
    white-space: nowrap;
}
.ico {
    width: 20px;
    height: 18px;
    fill: none;
    stroke: #3a6ab0;
    stroke-width: 1.500;
}
.amount h2 {
    margin-top: 5px;
    font-size: 7px;
    line-height: 11px;
    font-weight: 300;
    color: #555;
}
.sum {
    font-size: 11px;
    line-height: 12px;
    font-weight: 800;
    color: #0068b8;
}
.sum b {
    margin-left: 6px;
    font-size: 5px;
    color: #1a4f94;
}
.sum small {
    font-size: 5px;
    font-weight: 300;
    color: #888;
}
.sum.last {
    padding-left: 4px;
}
.note {
    padding-top: 2px;
    font-size: 4px;
    line-height: 6px;
    color: #888;
}
.note b {
    font-size: 5px;
    color: #1a4f94;
}
.arrow {
    margin: 32px 7px 0 0;
    fill: none;
    stroke: #2f5fa8;
    stroke-width: 2;
}
.notes {
    display: flex;
    margin: 16px 0 0 19px;
    height: 84px;
    color: #555;
    white-space: nowrap;
}
.thanks {
    width: 131px;
    flex: none;
    font-style: italic;
    border-right: 1px solid #aaa;
}
.help {
    width: 110px;
    padding-left: 14px;
    border-right: 1px solid #aaa;
}
.help h3 {
    font-size: 5px;
    line-height: 7px;
    font-weight: 800;
    color: #0060b4;
}
.help .green, .help b {
    color: #6cc030;
}
.help .green {
    margin-bottom: 7px;
}
.help b {
    font-size: 6px;
}
.bill footer {
    height: 48px;
    flex: none;
    margin-top: 17px;
    padding: 9px 19px;
    background: #0070c0;
    color: #e4f0fa;
    font-family: Inter, sans-serif;
    font-size: 3px;
    font-weight: 600;
    line-height: 5px;
    white-space: nowrap;
}

/* Right side */
.gutter {
    width: 12px;
    flex: none;
    margin-top: 20px;
    background: #4b4b4b;
    border-right: 2px solid #424242;
    box-shadow: 0 -20px 0 #424242;
}
.dock {
    width: 25px;
    flex: none;
    border-right: 3px solid #444;
}
.dock-head, .panels-head {
    height: 9px;
    padding-right: 3px;
    background: #424242;
    font-size: 8px;
    line-height: 6px;
    text-align: right;
}
.dock-group {
    display: flex;
    flex-direction: column;
    gap: 6px;
    align-items: center;
    padding: 8px 0 6px;
    border-bottom: 2px solid #444;
}
.dock-group svg {
    width: 13px;
    height: 13px;
}
.dock button {
    height: 13px;
}
.letter {
    font-size: 12px;
    line-height: 13px;
}
.script {
    font-family: "Liberation Serif", serif;
    font-style: italic;
    font-weight: bold;
}
.panels {
    width: 184px;
    flex: none;
    display: flex;
    flex-direction: column;
    border-right: 5px solid #484848;
}
.properties {
    display: flex;
    flex-direction: column;
    height: 334px;
    flex: none;
    border-bottom: 3px solid #444;
}
.tabs {
    display: flex;
    height: 18px;
    flex: none;
    background: #424242;
    color: #aaa;
}
.tabs button {
    width: 22px;
    padding-left: 5px;
    text-align: left;
    overflow: hidden;
}
.tabs .on {
    width: auto;
    padding: 0 5px;
    background: #535353;
    color: #f0f0f0;
    font-weight: bold;
}
.menu {
    margin-left: auto;
    padding-right: 3px;
    font-size: 10px;
    line-height: 17px;
}
.doc-row {
    display: flex;
    align-items: center;
    gap: 4px;
    height: 26px;
    flex: none;
    padding-left: 7px;
    border-bottom: 1px solid #444;
}
.pic {
    width: 14px;
    height: 15px;
    display: flex;
    align-items: center;
    justify-content: center;
}
.pic.dark {
    background: #383838;
}
.scroller {
    display: flex;
    flex: 1;
    min-height: 0;
}
.sections, .list {
    flex: 1;
    min-width: 0;
}
.section {
    height: 47px;
    padding-top: 6px;
    border-bottom: 1px solid #444;
}
.section.canvas-props {
    height: 153px;
    padding-top: 3px;
}
.section.quick {
    border-bottom: none;
}
.section h4 {
    display: flex;
    align-items: center;
    gap: 5px;
    padding-left: 5px;
    line-height: 10px;
}
.size {
    display: flex;
    align-items: center;
    gap: 14px;
    padding: 7px 0 0 10px;
}
.size svg {
    width: 8px;
    height: 14px;
}
.fields {
    display: grid;
    grid-template-columns: 6px 32px 8px 32px;
    column-gap: 4px;
    row-gap: 5px;
    align-items: center;
    color: #b8b8b8;
}
.fields label {
    text-align: right;
}
.fields input {
    width: 100%;
    height: 12px;
    padding-left: 3px;
    background: #454545;
    color: #e8e8e8;
}
.fields input:disabled {
    background: #4e4e4e;
    color: #6c6c6c;
}
.orient {
    display: flex;
    gap: 3px;
    padding: 8px 0 7px 42px;
}
.resolution {
    padding: 1px 0 6px 42px;
}
.modes {
    display: grid;
    grid-template-columns: 38px 83px;
    column-gap: 4px;
    row-gap: 4px;
    align-items: center;
}
.modes label {
    text-align: right;
}
.fill {
    display: flex;
    gap: 4px;
}
.fill .select {
    flex: 1;
}
.chip {
    width: 11px;
    border: 1px solid #3e3e3e;
}
.line {
    display: flex;
    align-items: center;
    gap: 7px;
    padding: 7px 0 0 7px;
}
.line .select {
    width: 46px;
    margin-left: 9px;
}
.solid select {
    height: 1px;
    width: 27px;
    margin-left: 4px;
    background: #ccc;
}
.scrollbar {
    width: 9px;
    flex: none;
    display: flex;
    flex-direction: column;
    align-items: center;
    justify-content: space-between;
    background: #4a4a4a;
    padding: 5px 0 6px;
}
.thumb {
    width: 7px;
    height: 223px;
    margin-bottom: auto;
    margin-top: 3px;
    background: #696969;
}

/* Layers */
.layers {
    flex: 1;
    min-height: 0;
    display: flex;
    flex-direction: column;
    margin-top: 2px;
    border-top: 1px solid #444;
}
.filter-row {
    display: flex;
    align-items: center;
    gap: 6px;
    height: 27px;
    flex: none;
    padding: 3px 0 0 3px;
    border-bottom: 1px solid #444;
}
.filter-row > svg {
    width: 9px;
    height: 9px;
}
.kind {
    width: 53px;
    margin-right: 2px;
}
.kind svg {
    width: 8px;
    height: 8px;
    margin-left: 4px;
}
.kind select {
    padding-left: 2px;
}
.toggle {
    width: 5px;
    height: 11px;
    border-radius: 3px;
    background: #3c3c3c;
    border-top: 6px solid #ddd;
}
.blend-row, .lock-row {
    display: flex;
    align-items: center;
    height: 18px;
    flex: none;
    padding-left: 4px;
    border-bottom: 1px solid #4a4a4a;
    color: #858585;
}
.blend-row .select {
    width: 75px;
    height: 13px;
    margin-right: 8px;
    background: #4e4e4e;
}
.blend-row .select::after {
    border-color: #666;
}
.blend-row label {
    width: 26px;
}
.blend-row input, .lock-row input {
    width: 20px;
    height: 9px;
    margin-right: 5px;
    padding-left: 2px;
    background: #484848;
    color: #747474;
}
.blend-row .chev, .lock-row .chev {
    border-color: #666;
}
.lock-row {
    gap: 5px;
    height: 19px;
    border-bottom: none;
}
.lock-row svg {
    width: 9px;
    height: 9px;
    color: #a0a0a0;
}
.lock-row label {
    margin-left: 8px;
    width: 9px;
}
.lock-row input {
    margin-right: 0;
}
.list {
    display: flex;
    flex-direction: column;
    overflow: hidden;
    font-family: Lato, sans-serif;
    font-size: 7px;
}
.list li {
    display: flex;
    align-items: center;
    flex: 1 1 0;
    min-height: 0;
    border-top: 1px solid #484848;
    white-space: nowrap;
}
.list .folder {
    flex: 0 0 18px;
    border-top: none;
}
.vis {
    align-self: stretch;
    width: 19px;
    flex: none;
    display: flex;
    align-items: center;
    justify-content: center;
    margin-right: 27px;
    border-right: 1px solid #4a4a4a;
    color: #aaa;
}
.vis svg {
    width: 8px;
    height: 8px;
}
.vis.off::before {
    content: "";
    width: 8px;
    height: 8px;
    border: 1px solid #4a4a4a;
}
.folder .vis {
    margin-right: 12px;
}
.folder > svg {
    width: 9px;
    height: 9px;
    margin: 0 7px 0 3px;
}
.t {
    margin-right: 11px;
}
.pixel .vis {
    margin-right: 23px;
}
.thumbnail {
    width: 15px;
    height: 21px;
    margin-right: 6px;
    background: radial-gradient(circle at 3px 5px, #333 1px, transparent 2px), repeating-conic-gradient(#ccc 0 25%, #fff 0 50%) 0 0 / 6px 6px;
}
.list .cut {
    flex: 0 0 19px;
    padding-top: 8px;
}
.layers .thumb {
    height: 66px;
    margin-top: 13px;
}
.layer-actions {
    display: flex;
    align-items: center;
    gap: 8px;
    height: 14px;
    flex: none;
    padding-left: 52px;
    border-top: 1px solid #444;
}
.layer-actions svg, .fx {
    width: 9px;
    height: 9px;
}
.fx {
    font-size: 8px;
    font-style: italic;
    line-height: 9px;
}
.dim {
    color: #888;
}
.watermark {
    position: absolute;
    right: 10px;
    bottom: 10px;
    font-family: "Noto Sans CJK JP", sans-serif;
    font-size: 36px;
    font-weight: 300;
    line-height: 58px;
    color: #222;
    pointer-events: none;
}
.watermark span {
    color: #7d9a12;
}
```
FILE: rulers.js
```js
// Fill a ruler with labels every 200 px
function fillRuler(id, from, to) {
    const ruler = document.getElementById(id);
    for (let value = from; value <= to; value += 200) {
        const label = document.createElement('span');
        label.textContent = Math.abs(value);
        if (Math.abs(value) < 1000) {
            label.className = 'wide';
        }
        ruler.appendChild(label);
    }
}

fillRuler('rulerTop', -2000, 4200);
fillRuler('rulerLeft', -800, 3600);

// The left ruler shows one digit per line
document.querySelectorAll('#rulerLeft span').forEach(function (label) {
    label.textContent = label.textContent.split('').join('\n');
});
```
